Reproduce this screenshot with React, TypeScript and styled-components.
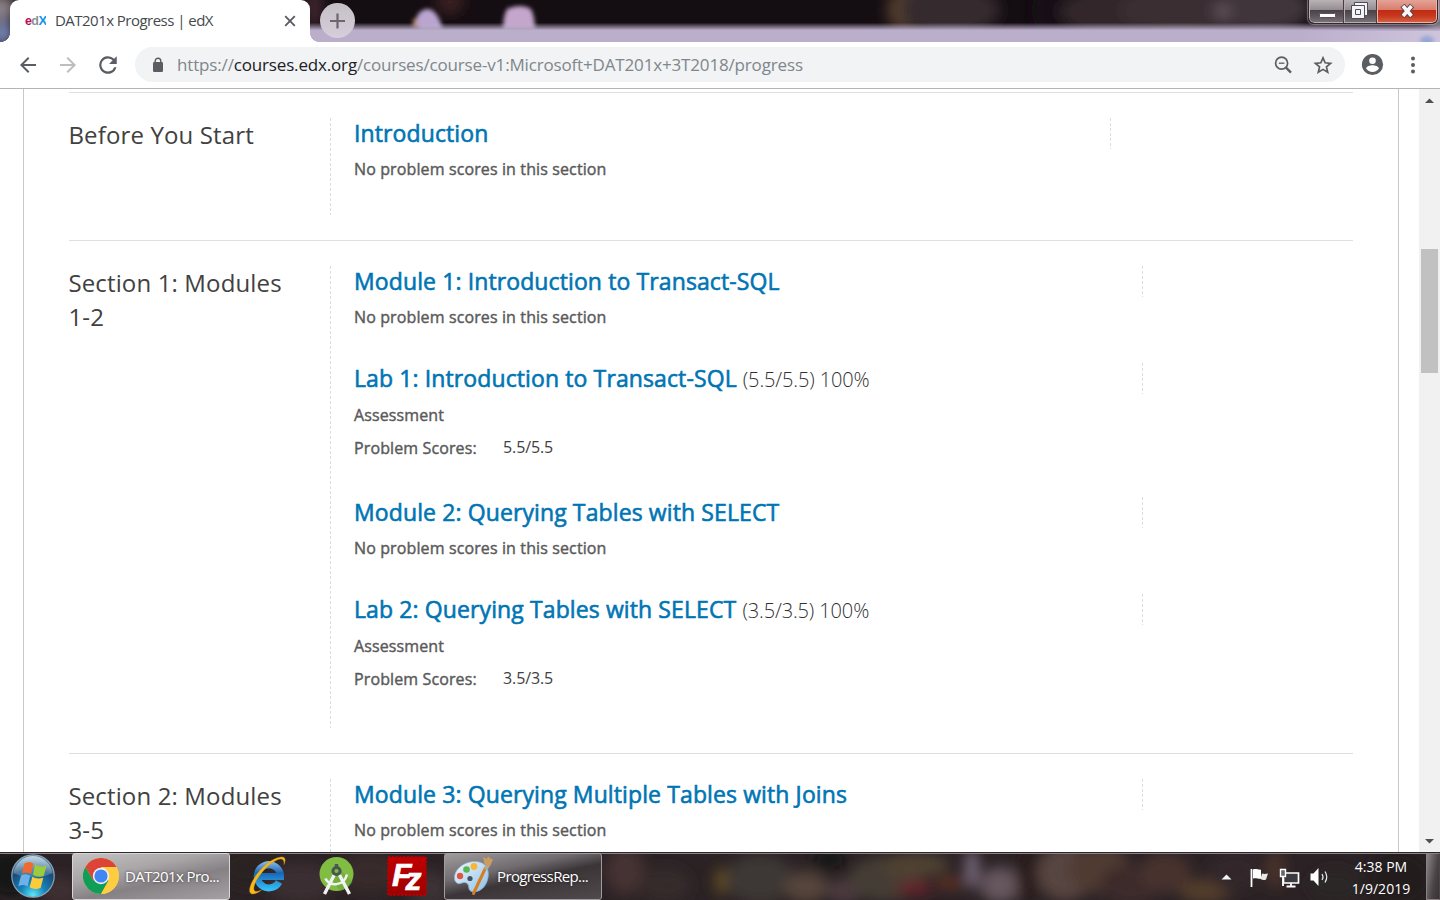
import React from 'react';
import styled, { createGlobalStyle } from 'styled-components';

const GlobalStyle = createGlobalStyle`
  * { box-sizing: border-box; }
  body { margin: 0; background: #fff; overflow: hidden; }
`;

const font = `"Open Sans", "Noto Sans", sans-serif`;

const Screen = styled.div`
  width: 1440px;
  height: 900px;
  display: flex;
  flex-direction: column;
  overflow: hidden;
  background: #fff;
  font-family: ${font};
`;

/* ---------- Browser frame ---------- */

const TitleBar = styled.header`
  position: relative;
  flex: none;
  height: 42px;
  display: flex;
  align-items: flex-start;
  background: #bbaecb;
`;

const Wallpaper = styled.svg`
  position: absolute;
  inset: 0;
  width: 100%;
  height: 100%;
`;

const Tab = styled.div`
  position: relative;
  width: 300px;
  height: 42px;
  margin-left: 10px;
  padding: 0 13px 0 15px;
  display: flex;
  align-items: center;
  background: #fff;
  border-radius: 9px 9px 0 0;
  &::before, &::after {
    content: '';
    position: absolute;
    bottom: 0;
    width: 9px;
    height: 9px;
  }
  &::before { left: -9px; background: radial-gradient(circle at 0 0, transparent 8.6px, #fff 9.2px); }
  &::after { right: -9px; background: radial-gradient(circle at 100% 0, transparent 8.6px, #fff 9.2px); }
`;

const TabTitle = styled.span`
  flex: 1;
  margin-left: 9px;
  padding-bottom: 2px;
  font-size: 15px;
  letter-spacing: -0.53px;
  line-height: 20px;
  color: #45494d;
  white-space: pre;
`;

const NewTab = styled.div`
  position: relative;
  width: 35px;
  height: 35px;
  margin: 3px 0 0 10px;
  border-radius: 50%;
  display: flex;
  align-items: center;
  justify-content: center;
  background: linear-gradient(#c5bfc4, #d6cfdc);
`;

const WindowButtons = styled.div`
  position: relative;
  display: flex;
  width: 130px;
  height: 24px;
  margin: 0 2px 0 auto;
  border: 1px solid #35292f;
  border-top: 0;
  border-radius: 0 0 6px 6px;
  overflow: hidden;
  box-shadow: 0 0 1px 1px rgba(255, 255, 255, 0.35);
`;

const WindowButton = styled.div<{ $w: number; $close?: boolean }>`
  width: ${p => p.$w}px;
  height: 23px;
  display: flex;
  border: 1px solid ${p => (p.$close ? '#efb3a5' : '#b5afb3')};
  border-top: 0;
  border-radius: ${p => (p.$close ? '0 0 5px 0' : '0')};
  &:first-child { border-radius: 0 0 0 5px; }
  background: ${p =>
    p.$close
      ? 'linear-gradient(#e3a397 0, #d97c6b 10px, #bd2b12 10px, #c8381c 16px, #d5654a 23px)'
      : 'linear-gradient(#b9b3b6 0, #938b90 10px, #4a4147 10px, #5d555b 16px, #7c757b 23px)'};
  & + & { box-shadow: -1px 0 0 #4b3c42; }
`;

const Toolbar = styled.div`
  flex: none;
  height: 47px;
  display: flex;
  align-items: center;
  padding: 0 15px 1px 16px;
  background: #fff;
  border-bottom: 1px solid #b5b3b6;
`;

const NavIcons = styled.div`
  display: flex;
  gap: 16px;
  width: 119px;
`;

const AddressBar = styled.div`
  width: 1210px;
  height: 35px;
  border-radius: 18px;
  display: flex;
  align-items: center;
  padding: 0 10px 0 17px;
  background: #f1f3f4;
`;

const Url = styled.span`
  flex: 1;
  margin-left: 13px;
  font-size: 17px;
  letter-spacing: -0.16px;
  line-height: 24px;
  color: #80868b;
  white-space: pre;
  b { font-weight: 400; color: #202124; }
`;

const BarIcons = styled.div`
  display: flex;
  gap: 16px;
`;

const MenuIcons = styled.div`
  display: flex;
  gap: 16px;
  margin-left: 16px;
`;

/* ---------- Page ---------- */

const Viewport = styled.main`
  flex: none;
  height: 763px;
  display: flex;
  overflow: hidden;
`;

const Course = styled.div`
  width: 1376px;
  height: 763px;
  margin-left: 23px;
  padding: 3px 45px 0 45px;
  border: solid #c8c8c8;
  border-width: 0 1px;
  overflow: hidden;
`;

const Section = styled.section`
  display: grid;
  grid-template-columns: 261px 1fr;
  width: 1284px;
  padding: 25px 0;
  border-top: 1px solid #dfdfdf;
`;

const SectionName = styled.h2`
  margin: 0 0 0 -0.6px;
  padding-right: 30px;
  font-size: 24px;
  font-weight: 400;
  letter-spacing: 0.14px;
  line-height: 34px;
  color: #414141;
`;

const dash = `repeating-linear-gradient(#dcdcdc 0 3px, transparent 3px 5px)`;

const Lessons = styled.div`
  padding-left: 24px;
  background: ${dash} 0 0 / 1px 100% no-repeat;
`;

const Lesson = styled.article<{ $h: number }>`
  height: ${p => p.$h}px;
`;

const LessonHead = styled.div<{ $w: number }>`
  width: ${p => p.$w}px;
  height: 31px;
  background: ${dash} 100% 0 / 1px 100% no-repeat;
  white-space: pre;
  line-height: 31px;
`;

const LessonLink = styled.a`
  font-size: 23px;
  letter-spacing: 0.11px;
  color: #0075b4;
  -webkit-text-stroke: 0.6px #0075b4;
`;

const Total = styled.span`
  margin-left: 6px;
  font-size: 20px;
  font-weight: 300;
  letter-spacing: -0.12px;
  color: #303030;
`;

const Label = styled.div`
  font-size: 16px;
  letter-spacing: 0.12px;
  line-height: 22px;
  color: #5a5a5a;
  -webkit-text-stroke: 0.42px #5a5a5a;
`;

const Note = styled(Label)<{ $scored: boolean }>`
  margin-top: ${p => (p.$scored ? 10 : 9)}px;
`;

const Scores = styled.div`
  display: flex;
  margin-top: 11px;
`;

const ScoreLabel = styled(Label)`
  width: 149px;
`;

const Score = styled.div`
  font-size: 16px;
  letter-spacing: -0.1px;
  line-height: 20px;
  color: #414141;
`;

const ScrollBar = styled.div`
  width: 21px;
  height: 763px;
  margin-left: auto;
  display: flex;
  flex-direction: column;
  align-items: center;
  justify-content: space-between;
  background: #f1f1f1;
`;

const ScrollArrow = styled.svg`
  width: 11px;
  height: 23px;
`;

const ScrollTrack = styled.div`
  flex: 1;
  padding-top: 137px;
`;

const ScrollThumb = styled.div`
  width: 17px;
  height: 124px;
  background: #c1c1c1;
`;

/* ---------- Taskbar ---------- */

const Taskbar = styled.footer`
  position: relative;
  flex: none;
  height: 48px;
  display: flex;
  border-top: 1px solid #2c272b;
  background: #2b2225;
`;

const Launchers = styled.div`
  position: relative;
  display: grid;
  grid-template-columns: 72px 158px 74px 66px 74px 158px;
  align-items: start;
`;

const Launcher = styled.div<{ $start?: boolean }>`
  height: 46px;
  display: flex;
  align-items: center;
  justify-content: center;
  padding-right: ${p => (p.$start ? 6 : 0)}px;
`;

const TaskButton = styled.div<{ $active?: boolean }>`
  height: 47px;
  display: flex;
  align-items: center;
  padding: 0 0 2px ${p => (p.$active ? 10 : 8)}px;
  gap: ${p => (p.$active ? 6 : 4)}px;
  border: 1px solid ${p => (p.$active ? '#d9d6d8' : '#a19ca0')};
  border-radius: 3px;
  background: ${p =>
    p.$active
      ? 'linear-gradient(168deg, #c4c1c2 0%, #aaa6a8 35%, #868184 60%, #a5a0a3 100%)'
      : 'linear-gradient(168deg, #a09c9e 0%, #706b6e 35%, #3b3538 55%, #4f494c 100%)'};
`;

const TaskName = styled.span<{ $ls: number }>`
  font-size: 15px;
  letter-spacing: ${p => p.$ls}px;
  line-height: 20px;
  color: #fff;
  text-shadow: 0 0 3px rgba(0, 0, 0, 0.6);
  white-space: pre;
`;

const Tray = styled.div`
  position: relative;
  margin-left: auto;
  display: flex;
  align-items: center;
`;

const Clock = styled.div`
  width: 80px;
  margin: 3px 5px 0 5px;
  font-size: 14px;
  line-height: 22px;
  text-align: center;
  color: #fff;
  white-space: pre;
`;

const ShowDesktop = styled.div`
  width: 14px;
  height: 47px;
  border: 1px solid #8a8084;
  border-right-color: #4c4448;
  background: linear-gradient(100deg, #8b8588 0, #4a4346 12px, #2a2326 26px, #1e181b 47px);
`;

type LessonData = { name: string; total?: string; score?: string };
type SectionData = { name: string; headWidth: number; lessons: LessonData[] };

const sections: SectionData[] = [
  { name: 'Before You Start', headWidth: 757, lessons: [{ name: 'Introduction' }] },
  {
    name: 'Section 1: Modules 1-2',
    headWidth: 789,
    lessons: [
      { name: 'Module 1: Introduction to Transact-SQL' },
      { name: 'Lab 1: Introduction to Transact-SQL', total: '(5.5/5.5) 100%', score: '5.5/5.5' },
      { name: 'Module 2: Querying Tables with SELECT' },
      { name: 'Lab 2: Querying Tables with SELECT', total: '(3.5/3.5) 100%', score: '3.5/3.5' },
    ],
  },
  {
    name: 'Section 2: Modules 3-5',
    headWidth: 789,
    lessons: [{ name: 'Module 3: Querying Multiple Tables with Joins' }],
  },
];

type Blob = [number, number, number, number, string];

const skyBlobs: Blob[] = [
  [0, 8, 16, 14, '#8d8389'], [2, 34, 12, 12, '#7e8fc0'],
  [314, 8, 7, 20, '#4b2c35'], [450, 2, 14, 12, '#3c2024'],
  [905, 10, 18, 22, '#57402f'], [950, 10, 50, 26, '#35292e'],
  [1048, 10, 16, 24, '#171015'], [1110, 12, 50, 26, '#32272b'],
  [1180, 10, 60, 26, '#3a2d32'], [1260, 8, 50, 26, '#41343a'],
  [1223, 12, 7, 8, '#67545e'], [1440, 10, 12, 22, '#988c96'],
];

const deskBlobs: Blob[] = [
  [10, 20, 26, 24, '#171215'], [60, 38, 20, 16, '#3c2f31'], [250, 14, 30, 20, '#2c2124'],
  [300, 30, 34, 20, '#3a2e30'], [370, 20, 30, 20, '#382b2a'], [430, 36, 20, 18, '#3a3034'],
  [625, 18, 20, 24, '#443032'], [665, 32, 26, 18, '#352a2b'],
  [722, 28, 8, 14, '#5c4a24'], [760, 26, 34, 24, '#3c3736'], [806, 34, 22, 16, '#54453a'],
  [830, 6, 18, 12, '#181316'], [845, 38, 18, 12, '#4c3a40'], [885, 26, 36, 22, '#453c36'],
  [915, 12, 34, 12, '#4f4232'], [915, 35, 18, 7, '#682029'], [950, 30, 14, 7, '#5c3024'],
  [972, 16, 7, 20, '#77697a'], [1000, 32, 20, 18, '#66575d'], [1028, 20, 12, 34, '#2c1a1e'],
  [1065, 20, 28, 28, '#574440'], [1100, 16, 30, 24, '#503b33'], [1130, 32, 30, 20, '#3d2b2a'],
  [1165, 20, 26, 20, '#46332f'], [1205, 38, 26, 12, '#523c2c'], [1235, 18, 26, 20, '#33272a'],
  [1275, 16, 10, 20, '#47332b'], [1335, 32, 26, 16, '#2c2626'], [1400, 26, 34, 30, '#221a1e'],
];

function Blobs({ blobs, id, blur }: { blobs: Blob[]; id: string; blur: number }) {
  return (
    <>
      <defs>
        <filter id={id} filterUnits="userSpaceOnUse" x="-40" y="-40" width="1520" height="130">
          <feGaussianBlur stdDeviation={blur} />
        </filter>
      </defs>
      <g filter={`url(#${id})`}>
        {blobs.map(([x, y, rx, ry, c], i) => (
          <ellipse key={i} cx={x} cy={y} rx={rx} ry={ry} fill={c} />
        ))}
      </g>
    </>
  );
}

function Browser() {
  return (
    <>
      <TitleBar>
        <Wallpaper viewBox="0 0 1440 42">
          <defs>
            <linearGradient id="edge" x1="0" y1="0" x2="0" y2="1">
              <stop offset="0.54" stopColor="#bbaecb" stopOpacity="0" />
              <stop offset="0.6" stopColor="#bbaecb" stopOpacity=".35" />
              <stop offset="0.72" stopColor="#bbaecb" />
            </linearGradient>
            <linearGradient id="fade" x1="0" y1="0" x2="1" y2="0">
              <stop offset="0" stopColor="#cec5dc" stopOpacity="0" />
              <stop offset="1" stopColor="#cec5dc" />
            </linearGradient>
            <filter id="soft" filterUnits="userSpaceOnUse" x="300" y="-20" width="1140" height="80">
              <feGaussianBlur stdDeviation="2" />
            </filter>
          </defs>
          <rect width="1440" height="42" fill="#140d12" />
          <Blobs blobs={skyBlobs} id="sky" blur={7} />
          <g filter="url(#soft)">
            <path d="M413 28v-8q4-4 8-1v9z" fill="#b98a5a" />
            <path d="M420 30q-6-8-2-16 10-10 18 0 6 8 6 16z" fill="#baa4d0" />
            <path d="M503 30q0-14 4-21 14-6 24 0 4 8 4 21z" fill="#c4a6cc" />
          </g>
          <rect x="300" width="1140" height="42" fill="url(#edge)" />
          <rect x="1300" y="31" width="140" height="11" fill="url(#fade)" />
          <ellipse cx="1427" cy="41" rx="7" ry="5" fill="#8fa0d2" opacity=".9" filter="url(#soft)" />
        </Wallpaper>
        <Tab>
          <svg width="21" height="16" viewBox="0 0 21 16" fontFamily="Liberation Sans, sans-serif" fontWeight="700">
            <text x="0" y="12" fontSize="12.500" fill="#b5105b" letterSpacing="-.6">e<tspan fill="#8c9196">d</tspan><tspan fill="#1593e6" fontSize="13">X</tspan></text>
          </svg>
          <TabTitle>DAT201x Progress | edX</TabTitle>
          <svg width="14" height="14" viewBox="0 0 14 14" stroke="#5a5d61" strokeWidth="1.9">
            <path d="M2.2 2.2l9.6 9.6M11.8 2.2l-9.6 9.6" />
          </svg>
        </Tab>
        <NewTab>
          <svg width="16" height="16" viewBox="0 0 16 16" stroke="#6d676d" strokeWidth="2.200">
            <path d="M7.500 .5v15M0 8h15" />
          </svg>
        </NewTab>
        <WindowButtons>
          <WindowButton $w={35}>
            <svg width="33" height="22" viewBox="0 0 33 22">
              <rect x="9.500" y="13.500" width="16" height="4" rx="1" fill="#fff" stroke="#55505c" />
            </svg>
          </WindowButton>
          <WindowButton $w={33}>
            <svg width="31" height="22" viewBox="0 0 31 22" fill="#f4f4f4" stroke="#4d4b5c" fillRule="evenodd">
              <path d="M9.500 2.500h13v13h-13z" />
              <path d="M6.500 5.500h13v13h-13zM10.500 9.500v5h5v-5z" />
            </svg>
          </WindowButton>
          <WindowButton $w={60} $close>
            <svg width="58" height="22" viewBox="0 0 58 22">
              <path d="M24.500 5.500l9.500 11M34 5.500l-9.500 11" stroke="#55424d" strokeWidth="5.600" />
              <path d="M25 6l8.500 10M33.500 6l-8.500 10" stroke="#f7f7f7" strokeWidth="3.600" />
            </svg>
          </WindowButton>
        </WindowButtons>
      </TitleBar>
      <Toolbar>
        <NavIcons>
          <svg width="24" height="24" viewBox="0 0 24 24" fill="#5a5d61">
            <path d="M20 11H7.830l5.590-5.590L12 4l-8 8 8 8 1.410-1.410L7.830 13H20v-2z" />
          </svg>
          <svg width="24" height="24" viewBox="0 0 24 24" fill="#bdbebf">
            <path d="M4 13h12.170l-5.590 5.590L12 20l8-8-8-8-1.410 1.410L16.170 11H4v2z" />
          </svg>
          <svg width="24" height="24" viewBox="0 0 24 24" fill="#5a5d61">
            <path d="M18.190 5.810A8.750 8.750 0 1 0 20.450 14.200h-2.280A6.560 6.560 0 1 1 16.640 7.360L13.120 10.900H20.750V3.250z" />
          </svg>
        </NavIcons>
        <AddressBar>
          <svg width="12" height="16" viewBox="0 0 12 16">
            <rect x="1" y="5" width="10" height="10" rx="1.300" fill="#5a5d61" />
            <path d="M3.200 6V4a2.800 2.800 0 0 1 5.600 0v2" fill="none" stroke="#5a5d61" strokeWidth="1.400" />
          </svg>
          <Url>https://<b>courses.edx.org</b>/courses/course-v1:Microsoft+DAT201x+3T2018/progress</Url>
          <BarIcons>
            <svg width="24" height="24" viewBox="0 0 24 24" fill="none" stroke="#5a5d61" strokeWidth="1.700">
              <circle cx="10.600" cy="10.200" r="6" />
              <path d="M15 14.600l5 5" strokeWidth="2.300" />
              <path d="M7.800 10.200h5.600" strokeWidth="1.300" />
            </svg>
            <svg width="24" height="24" viewBox="0 0 24 24" fill="none" stroke="#5a5d61" strokeWidth="1.700">
              <path d="M12 4.800l2.150 5 5.450.5-4.150 3.570 1.250 5.330L12 16.370 7.300 19.200l1.250-5.330L4.400 10.300l5.450-.5z" />
            </svg>
          </BarIcons>
        </AddressBar>
        <MenuIcons>
          <svg width="24" height="24" viewBox="0 0 24 24">
            <circle cx="11.500" cy="11.500" r="10.600" fill="#5a5d61" />
            <circle cx="11.500" cy="7.700" r="3.300" fill="#fff" />
            <path d="M5.100 15.600c0-2.200 4.200-3.400 6.400-3.400s6.400 1.200 6.400 3.400a7.700 7.700 0 0 1-12.800 0z" fill="#fff" />
          </svg>
          <svg width="24" height="24" viewBox="0 0 24 24" fill="#5a5d61">
            <circle cx="12" cy="5.500" r="2" />
            <circle cx="12" cy="12" r="2" />
            <circle cx="12" cy="18.500" r="2" />
          </svg>
        </MenuIcons>
      </Toolbar>
    </>
  );
}

function LessonRow({ lesson, headWidth }: { lesson: LessonData; headWidth: number }) {
  return (
    <Lesson $h={lesson.score ? 134 : 97}>
      <LessonHead $w={headWidth}>
        <LessonLink>{lesson.name}</LessonLink>
        {lesson.total && <Total>{lesson.total}</Total>}
      </LessonHead>
      <Note $scored={!!lesson.score}>{lesson.score ? 'Assessment' : 'No problem scores in this section'}</Note>
      {lesson.score && (
        <Scores>
          <ScoreLabel>Problem Scores:</ScoreLabel>
          <Score>{lesson.score}</Score>
        </Scores>
      )}
    </Lesson>
  );
}

function WindowsOrb() {
  return (
    <svg width="46" height="46" viewBox="0 0 46 46">
      <defs>
        <radialGradient id="orb" cx=".5" cy=".95" r=".85">
          <stop offset="0" stopColor="#5fe6f5" />
          <stop offset=".35" stopColor="#1584bb" />
          <stop offset=".75" stopColor="#1a4a78" />
          <stop offset="1" stopColor="#4d7696" />
        </radialGradient>
        <linearGradient id="shine" x1="0" y1="0" x2="0" y2="1">
          <stop offset="0" stopColor="#d5e8f2" stopOpacity=".85" />
          <stop offset="1" stopColor="#a9cbe0" stopOpacity=".2" />
        </linearGradient>
      </defs>
      <circle cx="23" cy="23" r="21.200" fill="url(#orb)" stroke="#8aa3b5" strokeWidth="1.200" />
      <path d="M3.500 20a19.700 19.700 0 0 1 39 0c-12 6-27 6-39 0z" fill="url(#shine)" />
      <path d="M14.500 10.500c3-2 6-2 9 0l-2.400 10.500c-3-2-6-2-9.200-.3z" fill="#ee6a30" />
      <path d="M25.100 11.300c3 2 6.500 3 11.400 1.500l-2.700 10c-3.500 1.600-7.500 1-10.900-1z" fill="#9ccb3b" />
      <path d="M11 22.500c3.200-1.800 6.200-1.700 9.200.2l-2.600 10.800c-3-2-6-2-9.300-.3z" fill="#6db0ea" />
      <path d="M22.300 23.700c3.200 1.800 6.500 2.300 11 1l-2.600 10c-3.600 1.900-8 1.400-11-.5z" fill="#fccb3a" />
    </svg>
  );
}

function ChromeLogo() {
  return (
    <svg width="36" height="36" viewBox="0 0 36 36">
      <circle cx="18" cy="18" r="18" fill="#ffcd42" />
      <path d="M18 18L10.200 22.500 2.410 9A18 18 0 0 1 33.600 9H18z" fill="#db4437" />
      <path d="M2.410 9A18 18 0 0 0 18 36l7.800-13.500L18 18l-7.800 4.500z" fill="#0f9d58" />
      <path d="M18 10H33.900A18 18 0 0 1 18 36l7.500-13.500z" fill="#ffcd42" />
      <circle cx="18" cy="18" r="8.200" fill="#f1f1f1" />
      <circle cx="18" cy="18" r="6.600" fill="#4285f4" />
    </svg>
  );
}

function ExplorerLogo() {
  return (
    <svg width="40" height="42" viewBox="0 0 40 42">
      <defs>
        <linearGradient id="ie" gradientUnits="userSpaceOnUse" x1="0" y1="6" x2="0" y2="36">
          <stop offset="0" stopColor="#8fc0ea" />
          <stop offset=".4" stopColor="#1a66b4" />
          <stop offset="1" stopColor="#35c4fb" />
        </linearGradient>
      </defs>
      <path d="M13 21.500H33.500A11.600 11.600 0 1 0 32 27" fill="none" stroke="url(#ie)" strokeWidth="7" />
      <path d="M37 9.500C39 5 38.500 1.500 34 2 24 3 11 15 5 27 .5 36.500 2.500 41 9 38.300c2-.8 4-2 5.500-3.300-5 2.500-8.500 2-7.500-3.200C8.500 24 20 9 31 4.500c4-1.500 6.500 0 6 5z" fill="#f5b91f" stroke="#c98f0c" strokeWidth=".4" />
    </svg>
  );
}

function StudioLogo() {
  return (
    <svg width="36" height="40" viewBox="0 0 36 40">
      <circle cx="17.500" cy="18" r="17" fill="#80bd42" />
      <path d="M17.500 10l16 16a17 17 0 0 1-12 8.500L11 23z" fill="#689f38" opacity=".5" />
      <path d="M15.200 19L5.500 38M20.500 19l10 19" stroke="#f2f2f2" strokeWidth="3.400" />
      <path d="M6.500 22.500c3 7.500 18 9 21.500-4" fill="none" stroke="#f2f2f2" strokeWidth="2.600" />
      <path d="M17.500 8v4" stroke="#455a50" strokeWidth="3.400" />
      <circle cx="17.500" cy="15" r="3.600" fill="#80bd42" stroke="#49584f" strokeWidth="3" />
    </svg>
  );
}

function FileZillaLogo() {
  return (
    <svg width="40" height="40" viewBox="0 0 40 40">
      <defs>
        <linearGradient id="fz" x1="0" y1="0" x2="0" y2="1">
          <stop offset="0" stopColor="#c00000" />
          <stop offset="1" stopColor="#9f0000" />
        </linearGradient>
      </defs>
      <rect x="1" y="1" width="38" height="38" fill="url(#fz)" stroke="#b40000" strokeWidth="2" strokeDasharray="2.200 1.600" />
      <text x="5" y="29.500" fontFamily="Liberation Sans, sans-serif" fontWeight="700" fontStyle="italic" fontSize="32" letterSpacing="-6" fill="#fff" stroke="#fff" strokeWidth=".7">
        F<tspan dy="4.500">z</tspan>
      </text>
    </svg>
  );
}

function PaintLogo() {
  return (
    <svg width="40" height="40" viewBox="0 0 40 40">
      <defs>
        <linearGradient id="palette" x1="0" y1="0" x2="1" y2="1">
          <stop offset="0" stopColor="#f1f8fd" />
          <stop offset="1" stopColor="#8cc0e6" />
        </linearGradient>
      </defs>
      <path d="M2 25C-1 15 10 5.500 22 5.500c10 0 14.500 7 13 16S27 37 19 35.500c-5-1-1.500-6-5.500-8.500-4-2.400-7.500 4-11.500-2z" fill="url(#palette)" stroke="#89b4d4" strokeWidth=".8" />
      <circle cx="7" cy="20" r="3.200" fill="#e35543" />
      <circle cx="13.500" cy="13.500" r="3.300" fill="#57b552" />
      <circle cx="21" cy="10.500" r="3.400" fill="#f8b632" />
      <circle cx="17" cy="22.500" r="2.600" fill="#425464" />
      <path d="M32.500 12L20.500 37.500" stroke="#d67c22" strokeWidth="3" strokeLinecap="round" />
      <path d="M31 12.500l1.500-4 4 1.500-2 4.500z" fill="#a9a9a4" />
      <path d="M31.500 8.500L30 1l3.500 1.500L35.500.5l2 2 2.500 1-3 7z" fill="#c99c5f" />
    </svg>
  );
}

function TrayIcons() {
  return (
    <svg width="122" height="26" viewBox="0 0 122 26">
      <path d="M7.500 15.500l5-5 5 5z" fill="#f2f2f2" />
      <path d="M37.500 5v18" stroke="#fff" strokeWidth="1.800" />
      <path d="M39 5.500c3-1.200 5 .6 8 .2v9c-3 .4-5-1.200-8-.1z" fill="#fff" />
      <path d="M48 9.500c2 .7 4 .4 6 0l-2 6c-2 1-4 .5-5.500-.5z" fill="#e8e8e8" />
      <path d="M71.500 9h13v10h-15v-5" fill="#3c3a40" stroke="#fff" strokeWidth="1.700" />
      <path d="M66.500 5.500h5v7h-5z" fill="#67636a" stroke="#fff" strokeWidth="1.400" />
      <path d="M69 13v9M77 19v3.500M72.500 22.500h9" stroke="#fff" strokeWidth="1.800" fill="none" />
      <path d="M96.500 9.500h3l5-5.500v18l-5-5.500h-3z" fill="#fff" />
      <path d="M108 10q2 3 0 6M111 7.500q3.500 5.500 0 11" fill="none" stroke="#e2e2e2" strokeWidth="1.300" />
    </svg>
  );
}

export default function App() {
  return (
    <Screen>
      <GlobalStyle />
      <Browser />
      <Viewport>
        <Course>
          {sections.map(s => (
            <Section key={s.name}>
              <SectionName>{s.name}</SectionName>
              <Lessons>
                {s.lessons.map(l => (
                  <LessonRow key={l.name} lesson={l} headWidth={s.headWidth} />
                ))}
              </Lessons>
            </Section>
          ))}
        </Course>
        <ScrollBar>
          <ScrollArrow viewBox="0 0 11 23"><path d="M1 14l4.500-4.500L10 14z" fill="#505050" /></ScrollArrow>
          <ScrollTrack><ScrollThumb /></ScrollTrack>
          <ScrollArrow viewBox="0 0 11 23"><path d="M1 10l4.500 4.500L10 10z" fill="#505050" /></ScrollArrow>
        </ScrollBar>
      </Viewport>
      <Taskbar>
        <Wallpaper viewBox="0 0 1440 47" preserveAspectRatio="none">
          <Blobs blobs={deskBlobs} id="desk" blur={6.5} />
          <rect width="1440" height="1" fill="#8d8287" />
        </Wallpaper>
        <Launchers>
          <Launcher $start><WindowsOrb /></Launcher>
          <TaskButton $active>
            <ChromeLogo />
            <TaskName $ls={-0.58}>DAT201x Pro...</TaskName>
          </TaskButton>
          <Launcher><ExplorerLogo /></Launcher>
          <Launcher><StudioLogo /></Launcher>
          <Launcher><FileZillaLogo /></Launcher>
          <TaskButton>
            <PaintLogo />
            <TaskName $ls={-0.63}>ProgressRep...</TaskName>
          </TaskButton>
        </Launchers>
        <Tray>
          <TrayIcons />
          <Clock>
            <div>4:38 PM</div>
            <div>1/9/2019</div>
          </Clock>
          <ShowDesktop />
        </Tray>
      </Taskbar>
    </Screen>
  );
}
